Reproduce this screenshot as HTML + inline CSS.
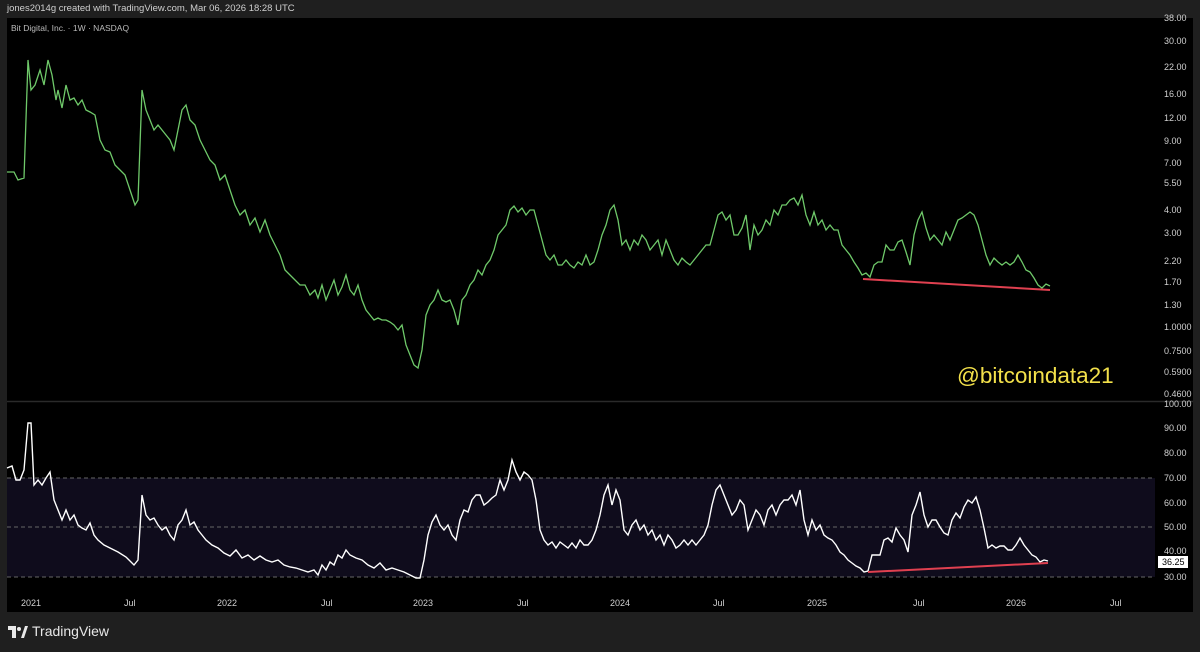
<!DOCTYPE html><html><head><style>
body{margin:0;background:#1f1f1f;width:1200px;height:652px;overflow:hidden;font-family:"DejaVu Sans","Liberation Sans",sans-serif}
.t{position:absolute;color:#d0d0d0;font-size:9px;font-family:"Liberation Sans",sans-serif}
</style></head><body>
<div class="t" style="left:7px;top:3px;color:#cfcfcf;font-size:9.5px">jones2014g created with TradingView.com, Mar 06, 2026 18:28 UTC</div>
<svg width="1200" height="652" style="position:absolute;left:0;top:0;z-index:-1">
<rect x="7" y="18" width="1186" height="594" fill="#000"/>
<line x1="7" y1="401.5" x2="1193" y2="401.5" stroke="#2a2a2a" stroke-width="1.5"/>
<rect x="7" y="478" width="1148" height="99" fill="#0f0c1c"/>
<g stroke="#666" stroke-dasharray="4,3" stroke-width="1">
<line x1="7" y1="478" x2="1155" y2="478"/><line x1="7" y1="527" x2="1155" y2="527"/><line x1="7" y1="577" x2="1155" y2="577"/></g>
<polyline fill="none" stroke="#6fc96a" stroke-width="1.3" points="7,172 14,172 18,180 24,178 28,60 31,90 35,85 40,70 44,85 48,60 52,75 56,100 58,90 62,108 66,85 70,100 74,98 78,105 82,100 86,110 90,112 95,115 100,140 105,150 110,152 115,165 120,170 125,175 130,190 135,205 138,200 142,90 146,110 150,120 154,130 158,125 162,130 166,135 170,140 174,150 178,130 182,110 186,105 190,120 195,125 200,140 205,150 210,160 215,165 220,180 225,175 230,190 235,205 240,215 245,210 250,225 255,218 260,232 265,220 270,235 275,245 280,255 285,270 290,275 295,280 300,285 305,285 310,295 315,290 318,298 322,285 326,300 330,290 334,280 338,295 342,287 346,275 350,290 354,295 358,285 362,300 366,310 370,315 374,320 378,318 382,320 386,320 390,322 394,325 398,330 402,325 406,345 410,355 414,365 418,368 422,350 426,315 430,305 434,300 438,290 442,300 446,302 450,300 454,310 458,325 462,300 466,295 470,285 474,280 478,270 482,275 486,265 490,260 494,250 498,235 502,230 506,225 510,210 514,206 518,212 522,208 526,215 530,210 534,210 538,225 542,240 546,255 550,260 554,255 558,265 562,265 566,260 570,265 574,268 578,262 582,265 586,255 590,265 594,262 598,250 602,235 606,225 610,210 614,205 618,220 622,245 626,240 630,250 634,240 638,245 642,235 646,240 650,250 654,245 658,240 662,255 666,240 670,250 674,260 678,265 682,258 686,262 690,265 694,260 698,255 702,250 706,245 710,245 714,230 718,215 722,212 726,220 730,215 734,235 738,235 742,228 746,215 750,250 754,225 758,235 762,230 766,220 770,225 774,210 778,215 782,205 786,205 790,200 794,198 798,205 802,195 806,215 810,225 814,212 818,225 822,220 826,230 830,225 834,230 838,230 842,245 846,250 850,255 854,262 858,268 862,275 866,273 870,277 874,265 878,262 882,262 886,245 890,250 894,250 898,242 902,240 906,252 910,265 914,235 918,220 922,212 926,228 930,240 934,235 938,240 942,245 946,232 950,240 954,230 958,220 962,218 966,215 970,212 974,215 978,225 982,240 986,255 990,265 994,258 998,262 1002,265 1006,262 1010,265 1014,262 1018,255 1022,262 1026,270 1030,272 1034,278 1038,285 1042,288 1046,284 1050,286"/>
<line x1="863" y1="279" x2="1050" y2="290" stroke="#e04050" stroke-width="2"/>
<polyline fill="none" stroke="#fff" stroke-width="1.4" points="7,468 12,466 16,480 20,480 24,470 28,423 31,423 34,485 38,480 42,485 46,478 50,472 54,500 58,510 62,520 66,510 70,520 74,515 78,525 82,528 86,530 90,523 94,535 98,540 104,545 110,548 118,552 126,557 134,565 138,560 142,495 146,515 150,520 154,518 158,525 162,530 166,527 170,535 174,540 178,525 182,520 186,510 190,525 194,522 198,530 202,535 206,540 212,545 218,548 224,553 230,556 236,550 242,558 248,555 254,560 260,556 266,560 272,562 278,560 284,565 290,567 296,568 302,570 308,572 314,570 318,575 322,565 326,570 330,562 334,565 338,555 342,558 346,550 350,555 356,558 362,560 368,565 374,568 380,563 386,570 392,568 398,570 404,572 410,575 416,578 420,578 424,560 428,535 432,522 436,515 440,525 444,530 448,525 452,535 456,540 460,520 464,510 468,512 472,500 476,495 480,495 484,505 488,502 492,498 496,495 500,480 504,490 508,480 512,460 516,472 520,480 524,472 528,475 532,480 536,500 540,530 544,540 548,545 552,542 556,548 560,542 564,545 568,548 572,543 576,548 580,540 584,545 588,545 592,540 596,530 600,515 604,495 608,485 612,505 616,490 620,500 624,530 628,535 632,525 636,520 640,530 644,525 648,535 652,530 656,540 660,535 664,545 668,535 672,540 676,548 680,545 684,540 688,545 692,540 696,545 700,540 704,535 708,525 712,505 716,490 720,485 724,495 728,505 732,515 736,510 740,500 744,505 748,530 752,520 756,510 760,515 764,525 768,510 772,505 776,515 780,505 784,500 788,500 792,495 796,505 800,490 804,520 808,535 812,520 816,530 820,525 824,535 828,538 832,540 836,545 840,552 844,555 848,560 852,563 856,566 860,568 864,572 868,571 872,555 876,555 880,555 884,540 888,538 892,542 896,528 900,535 904,540 908,552 912,515 916,505 920,492 924,515 928,527 932,520 936,520 940,527 944,533 948,535 952,520 956,513 960,518 964,507 968,500 972,503 976,497 980,510 984,528 988,548 992,545 996,548 1000,546 1004,546 1008,550 1012,550 1016,545 1020,538 1024,545 1028,550 1032,555 1036,557 1040,562 1044,560 1048,561"/>
<line x1="868" y1="572" x2="1048" y2="563" stroke="#e04050" stroke-width="2"/>
<rect x="1158" y="556" width="30" height="12" fill="#fff"/>
</svg>
<div class="t" style="left:11px;top:23px;font-size:8.5px;color:#bbb">Bit Digital, Inc. · 1W · NASDAQ</div>
<div style="position:absolute;left:957px;top:363px;color:#f2e04a;font-size:22.5px;font-family:'Liberation Sans',sans-serif">@bitcoindata21</div>
<div class="t" style="left:1164px;top:13px">38.00</div><div class="t" style="left:1164px;top:36px">30.00</div><div class="t" style="left:1164px;top:62px">22.00</div><div class="t" style="left:1164px;top:89px">16.00</div><div class="t" style="left:1164px;top:113px">12.00</div><div class="t" style="left:1164px;top:136px">9.00</div><div class="t" style="left:1164px;top:158px">7.00</div><div class="t" style="left:1164px;top:178px">5.50</div><div class="t" style="left:1164px;top:205px">4.00</div><div class="t" style="left:1164px;top:228px">3.00</div><div class="t" style="left:1164px;top:256px">2.20</div><div class="t" style="left:1164px;top:277px">1.70</div><div class="t" style="left:1164px;top:300px">1.30</div><div class="t" style="left:1164px;top:322px">1.0000</div><div class="t" style="left:1164px;top:346px">0.7500</div><div class="t" style="left:1164px;top:367px">0.5900</div><div class="t" style="left:1164px;top:389px">0.4600</div>
<div class="t" style="left:1164px;top:399px">100.00</div><div class="t" style="left:1164px;top:423px">90.00</div><div class="t" style="left:1164px;top:448px">80.00</div><div class="t" style="left:1164px;top:473px">70.00</div><div class="t" style="left:1164px;top:498px">60.00</div><div class="t" style="left:1164px;top:522px">50.00</div><div class="t" style="left:1164px;top:546px">40.00</div><div class="t" style="left:1162px;top:557px;color:#000">36.25</div><div class="t" style="left:1164px;top:572px">30.00</div>
<div class="t" style="left:21px;top:598px">2021</div><div class="t" style="left:124px;top:598px">Jul</div><div class="t" style="left:217px;top:598px">2022</div><div class="t" style="left:321px;top:598px">Jul</div><div class="t" style="left:413px;top:598px">2023</div><div class="t" style="left:517px;top:598px">Jul</div><div class="t" style="left:610px;top:598px">2024</div><div class="t" style="left:713px;top:598px">Jul</div><div class="t" style="left:807px;top:598px">2025</div><div class="t" style="left:913px;top:598px">Jul</div><div class="t" style="left:1006px;top:598px">2026</div><div class="t" style="left:1110px;top:598px">Jul</div>
<svg style="position:absolute;left:8px;top:626px" width="20" height="12"><path d="M0 0H8V12H4V4H0Z M13 12L17 0H20L16 12Z" fill="#e8e8e8"/><circle cx="11" cy="3" r="2" fill="#e8e8e8"/></svg>
<div style="position:absolute;left:32px;top:623px;color:#e8e8e8;font-size:14px;font-family:'Liberation Sans',sans-serif">TradingView</div>
</body></html>
